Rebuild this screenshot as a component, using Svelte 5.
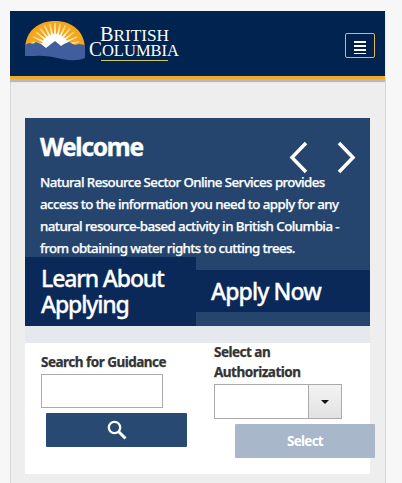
<script>
  const lines = [
    { text: 'Natural Resource Sector Online Services provides', spacing: -0.57 },
    { text: 'access to the information you need to apply for any', spacing: -0.56 },
    { text: 'natural resource-based activity in British Columbia -', spacing: -0.55 },
    { text: 'from obtaining water rights to cutting trees.', spacing: -0.58 }
  ];
  const rays = Array.from({ length: 15 }, (_, i) => i * 13 - 1);
  const point = (deg, r) => {
    const a = (deg * Math.PI) / 180;
    return `${(30 - r * Math.cos(a)).toFixed(2)},${(27 - r * Math.sin(a)).toFixed(2)}`;
  };
</script>

<div class="page">
  <header>
    <svg class="logo" width="160" height="46" viewBox="0 0 160 46" role="img" aria-label="British Columbia">
      <defs>
        <clipPath id="sun"><path d="M0 30C0 11 13 1 30 1s30 10 30 29z" /></clipPath>
        <radialGradient id="glow" gradientUnits="userSpaceOnUse" cx="30" cy="27" r="28">
          <stop offset=".35" stop-color="#fff" />
          <stop offset=".62" stop-color="#ffe9a8" />
          <stop offset="1" stop-color="#f9b42c" />
        </radialGradient>
      </defs>
      <g clip-path="url(#sun)">
        <rect width="60" height="31" fill="#f3a51f" />
        {#each rays as deg}
          <polygon points="{point(deg, 26)} {point(deg - 9, 9)} {point(deg + 9, 9)}" fill="url(#glow)" />
          <polygon points="{point(deg - 2.5, 24)} {point(deg, 6)} {point(deg + 2.5, 24)}" fill="url(#glow)" />
        {/each}
        <circle cx="30" cy="27" r="13" fill="#fff" />
      </g>
      <path d="M0 25l4-2 4 1 3-2 5 2 5 4 5-4 4-3 6 5 3-2 5-2 6 3 4-1 6 1v13c-5 2-10 2.500-17 2-9-1-20-5-33-4H0z" fill="#405e9d" />
      <g fill="#fff" font-family="Liberation Serif, Times New Roman, serif">
        <text x="75" y="21" font-size="20" textLength="69" lengthAdjust="spacingAndGlyphs">B<tspan font-size="17">RITISH</tspan></text>
        <text x="64" y="35.700" font-size="20" textLength="90" lengthAdjust="spacingAndGlyphs">C<tspan font-size="17">OLUMBIA</tspan></text>
      </g>
      <path d="M76 40.500h67" stroke="#d5c760" />
    </svg>
    <button class="menu" aria-label="Menu"><i></i><i></i><i></i><i></i></button>
  </header>
  <main>
    <section class="hero">
      <div class="title">
        <h1>Welcome</h1>
        <svg width="66" height="34" viewBox="0 0 66 34" fill="none" stroke="#fff" stroke-width="3.500">
          <path d="M17 2L3 16.500 17 31M50 2l14 14.500L50 31" />
        </svg>
      </div>
      <p>
        {#each lines as line}
          <span style="letter-spacing:{line.spacing}px">{line.text}</span>
        {/each}
      </p>
      <nav>
        <a class="learn" href="#learn">Learn About<br />Applying</a>
        <a class="apply" href="#apply">Apply Now</a>
      </nav>
    </section>
    <section class="forms">
      <div class="guidance">
        <label for="search">Search for Guidance</label>
        <input id="search" />
        <button class="find" aria-label="Search">
          <svg width="20" height="20" viewBox="0 0 20 20" fill="none" stroke="#fff">
            <circle cx="7.500" cy="7.500" r="5.700" stroke-width="2.300" /><path d="M11.500 11.500l7 7" stroke-width="3" />
          </svg>
        </button>
      </div>
      <div class="authorization">
        <span class="label">Select an<br />Authorization</span>
        <div class="combo"><div class="value"></div><div class="drop"></div></div>
        <button class="select">Select</button>
      </div>
    </section>
  </main>
</div>

<style>
  :global(body) { background: #f7f7f7; overflow: hidden; }
  * { box-sizing: border-box; }
  .page {
    width: 376px; height: 483px; margin-left: 10px; padding-top: 11px; overflow: hidden;
    font-family: "Noto Sans", "Open Sans", sans-serif; color: #fff;
  }
  header {
    position: relative; height: 68px; width: 375px; padding: 9px 10px 0 15px;
    display: flex; justify-content: space-between; align-items: flex-start;
    background: #002350; border-bottom: 3px solid #efaa2c; box-shadow: 0 3px 1px #b9b9b9;
  }
  .logo { display: block; }
  .menu {
    width: 30px; height: 25px; margin-top: 13px; padding: 3px 0 0; border: 1px solid #dcb64e; border-radius: 2px;
    background: #01204b; display: flex; flex-direction: column; align-items: center; justify-content: center; gap: 2px;
  }
  .menu i { width: 12px; height: 2px; background: #fff; flex: none; }
  .menu i:last-child { height: 1px; }
  main { height: 404px; padding: 39px 15px 0 14px; background: #eee; border: solid #d6d6d6; border-width: 0 1px; }
  .hero { height: 208px; width: 345px; background: #25456f; display: flex; flex-direction: column; }
  .title { height: 53px; padding: 11px 15px 0; display: flex; justify-content: space-between; }
  .title svg { margin-top: 12px; overflow: visible; }
  h1 { margin: 0; font-size: 24.500px; line-height: 36px; letter-spacing: -1.25px; -webkit-text-stroke: .4px #fff; }
  p { margin: 0; height: 86px; padding-left: 15px; font-size: 13.300px; line-height: 22px; font-weight: 500; -webkit-text-stroke: .25px #fff; }
  p span { display: block; white-space: nowrap; }
  nav { display: flex; align-items: flex-start; height: 69px; flex: none; }
  nav a { color: #fff; text-decoration: none; font-size: 23px; line-height: 26px; font-weight: 500; background: #0a2958; -webkit-text-stroke: .3px #fff; }
  .learn { width: 171px; height: 69px; padding: 8px 0 0 16px; letter-spacing: -1.15px; }
  .apply { width: 174px; height: 42px; margin-top: 13px; padding: 8px 0 0 15px; letter-spacing: -.9px; }
  .forms {
    height: 148px; width: 345px; border-top: 17px solid #e5e9ee; background: #fff; color: #333;
    display: flex; font-size: 13.500px; line-height: 20px; font-weight: 700; letter-spacing: -.51px;
  }
  .guidance { width: 189px; padding: 9px 0 0 16px; }
  label, .label { display: block; white-space: nowrap; -webkit-text-stroke: .25px #333; }
  .label { margin-top: -1px; }
  input { display: block; width: 122px; height: 34px; margin-top: 2px; border: 1px solid #aaa; background: #fff; }
  .find {
    width: 141px; height: 34px; margin: 5px 0 0 5px; padding: 0; border: 0; border-radius: 1px; background: #284972;
    display: flex; align-items: center; justify-content: center;
  }
  .authorization { width: 156px; }
  .combo { display: flex; width: 128px; height: 35px; margin-top: 2px; border: 1px solid #aaa; background: #fff; }
  .value { flex: 1; }
  .drop { width: 33px; border-left: 1px solid #aaa; background: linear-gradient(#f3f3f3, #e2e2e2); display: flex; align-items: center; justify-content: center; }
  .drop::after { content: ""; border: 4px solid transparent; border-top-color: #111; border-bottom: 0; }
  .select {
    display: block; width: 140px; height: 34px; margin: 5px 0 0 21px; padding: 0; border: 0; border-radius: 1px;
    background: #a9b7ca; color: #fff; font: 700 13.500px/34px "Noto Sans", "Open Sans", sans-serif; letter-spacing: -.75px;
  }
</style>
